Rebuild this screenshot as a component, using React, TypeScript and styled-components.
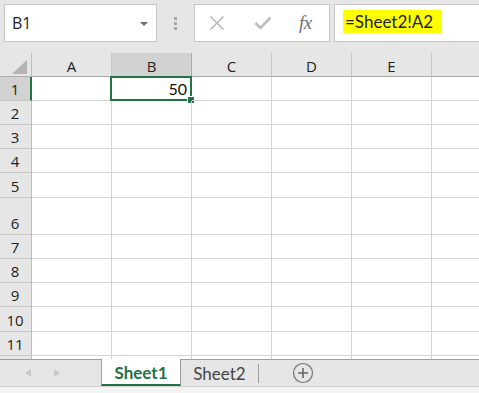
import React from "react";
import styled, { createGlobalStyle } from "styled-components";

const Global = createGlobalStyle`
  html, body { margin: 0; padding: 0; background: #ffffff; }
  * { box-sizing: border-box; }
`;

const COLS = ["A", "B", "C", "D", "E", ""];
const ROW_HEIGHTS = [24, 24, 24, 24, 25, 37, 24, 24, 24, 25, 24, 24];
const VISIBLE_LABELS = 11;
const GREEN = "#217346";
const UI_FONT = `"Open Sans", "Noto Sans", sans-serif`;
const CELL_FONT = `"Lato", "Liberation Sans", sans-serif`;

const Page = styled.div`
  width: 479px;
  height: 393px;
  overflow: hidden;
  display: flex;
  flex-direction: column;
  background: #e6e6e6;
`;

const Toolbar = styled.div`
  height: 53px;
  flex: none;
  display: flex;
  align-items: flex-start;
  padding: 4px 0 0 4px;
  background: #e6e6e6;
  overflow: hidden;
  & > * { flex: none; }
`;

const NameBox = styled.div`
  width: 153px;
  height: 38px;
  background: #fff;
  border: 1px solid #c6c6c6;
  display: flex;
  align-items: center;
  justify-content: space-between;
  padding: 0 8px 0 7px;
  font-family: ${UI_FONT};
  font-size: 16px;
  color: #222;
`;

const DropArrow = styled.span`
  width: 0;
  height: 0;
  border-left: 4px solid transparent;
  border-right: 4px solid transparent;
  border-top: 4px solid #6e6e6e;
  margin-top: 2px;
`;

const Dots = styled.div`
  width: 37px;
  height: 38px;
  display: flex;
  flex-direction: column;
  align-items: center;
  justify-content: center;
  gap: 2px;
`;

const Dot = styled.span`
  width: 3px;
  height: 3px;
  background: #a8a8a8;
`;

const ButtonGroup = styled.div`
  width: 136px;
  height: 38px;
  background: #fff;
  border: 1px solid #c6c6c6;
  display: flex;
  align-items: center;
  padding-left: 14px;
`;

const IconSlot = styled.div<{ $w: number }>`
  width: ${(p) => p.$w}px;
  height: 36px;
  display: flex;
  align-items: center;
  flex: none;
`;

const Fx = styled.span`
  font-family: "Liberation Serif", "DejaVu Serif", serif;
  font-style: italic;
  font-size: 19px;
  color: #6f6f6f;
  letter-spacing: -0.5px;
`;

const FormulaBar = styled.div`
  width: 160px;
  margin-left: 4px;
  height: 38px;
  background: #fff;
  border: 1px solid #c6c6c6;
  border-right: none;
  display: flex;
  align-items: center;
  padding-left: 8px;
`;

const Highlight = styled.span`
  background: #ffff00;
  height: 23px;
  line-height: 23px;
  padding: 0 9px 0 2px;
  margin-top: -4px;
  font-family: ${CELL_FONT};
  font-size: 17px;
  color: #222;
`;

const Sheet = styled.div`
  flex: none;
  height: 306px;
  display: grid;
  grid-template-columns: 32px repeat(6, 80px);
  grid-template-rows: 24px ${ROW_HEIGHTS.map((h) => `${h}px`).join(" ")};
  overflow: hidden;
  background: #fff;
`;

const Corner = styled.div`
  background: #e6e6e6;
  border-right: 1px solid #bdbdbd;
  border-bottom: 1px solid #ababab;
  position: relative;
`;

const CornerTri = styled.svg`
  position: absolute;
  left: 12px;
  top: 7px;
`;

const ColHeader = styled.div<{ $sel?: boolean }>`
  background: ${(p) => (p.$sel ? "#d2d2d2" : "#e6e6e6")};
  border-right: 1px solid ${(p) => (p.$sel ? "#ababab" : "#c6c6c6")};
  border-bottom: 1px solid #ababab;
  display: flex;
  align-items: center;
  justify-content: center;
  font-family: ${UI_FONT};
  font-size: 15px;
  color: #222;
  padding-top: 2px;
`;

const RowHeader = styled.div<{ $sel?: boolean }>`
  background: ${(p) => (p.$sel ? "#d2d2d2" : "#e6e6e6")};
  border-right: ${(p) => (p.$sel ? `2px solid ${GREEN}` : "1px solid #bdbdbd")};
  border-bottom: 1px solid #c6c6c6;
  display: flex;
  align-items: flex-end;
  justify-content: center;
  padding-bottom: 1px;
  padding-right: ${(p) => (p.$sel ? "0" : "1px")};
  font-family: ${UI_FONT};
  font-size: 15px;
  line-height: 20px;
  color: #222;
`;

const Cell = styled.div`
  border-right: 1px solid #d4d4d4;
  border-bottom: 1px solid #d4d4d4;
  position: relative;
  display: flex;
  align-items: center;
  justify-content: flex-end;
  padding-right: 4px;
  font-family: ${CELL_FONT};
  font-size: 16px;
  color: #111;
`;

const Selection = styled.div`
  position: absolute;
  left: -2px;
  top: -1px;
  right: -1px;
  bottom: -1px;
  border: 2px solid ${GREEN};
  pointer-events: none;
`;

const FillHandle = styled.div`
  position: absolute;
  right: -4px;
  bottom: -4px;
  width: 6px;
  height: 6px;
  background: ${GREEN};
  outline: 1px solid #fff;
`;

const TabBar = styled.div`
  height: 27px;
  flex: none;
  display: flex;
  align-items: stretch;
  background: #e6e6e6;
  border-top: 1px solid #9e9e9e;
`;

const NavArrows = styled.div`
  width: 101px;
  display: flex;
  align-items: center;
  padding-left: 25px;
  gap: 23px;
`;

const Tri = styled.span<{ $dir: "l" | "r" }>`
  width: 0;
  height: 0;
  border-top: 4px solid transparent;
  border-bottom: 4px solid transparent;
  ${(p) =>
    p.$dir === "l"
      ? "border-right: 6px solid #c8c8c8;"
      : "border-left: 6px solid #c8c8c8;"}
`;

const Tab = styled.div<{ $active?: boolean }>`
  width: ${(p) => (p.$active ? "80px" : "77px")};
  display: flex;
  align-items: center;
  justify-content: center;
  font-family: "Lato", "Liberation Sans", sans-serif;
  font-size: 17px;
  font-weight: ${(p) => (p.$active ? 700 : 400)};
  color: ${(p) => (p.$active ? GREEN : "#444")};
  background: ${(p) => (p.$active ? "#fff" : "transparent")};
  ${(p) =>
    p.$active
      ? `border-left: 1px solid #9e9e9e; border-right: 1px solid #9e9e9e; border-bottom: 2px solid ${GREEN}; margin-top: -1px; padding-top: 1px;`
      : ""}
`;

const TabSep = styled.div`
  width: 1px;
  background: #9e9e9e;
  margin: 4px 0 3px 0;
`;

const AddButton = styled.div`
  margin-left: 33px;
  display: flex;
  align-items: center;
`;

const StatusStrip = styled.div`
  flex: 1;
  background: #f3f3f3;
  border-top: 1px solid #d0d0d0;
`;

export default function App() {
  return (
    <>
      <Global />
      <Page>
        <Toolbar>
          <NameBox>
            <span>B1</span>
            <DropArrow />
          </NameBox>
          <Dots>
            <Dot />
            <Dot />
            <Dot />
          </Dots>
          <ButtonGroup>
            <IconSlot $w={45}>
              <svg width="16" height="16" viewBox="0 0 16 16">
                <path d="M1.5 1.5 L14.5 14.5 M14.5 1.5 L1.5 14.5" stroke="#b8b8b8" strokeWidth="1.6" fill="none" />
              </svg>
            </IconSlot>
            <IconSlot $w={45}>
              <svg width="18" height="14" viewBox="0 0 18 14">
                <path d="M1.5 7 L6.5 12 L16.5 1.5" stroke="#bdbdbd" strokeWidth="2.6" fill="none" />
              </svg>
            </IconSlot>
            <IconSlot $w={30}>
              <Fx>fx</Fx>
            </IconSlot>
          </ButtonGroup>
          <FormulaBar>
            <Highlight>=Sheet2!A2</Highlight>
          </FormulaBar>
        </Toolbar>
        <Sheet>
          <Corner>
            <CornerTri width="15" height="14" viewBox="0 0 15 14">
              <polygon points="15,0 15,14 0,14" fill="#b4b4b4" />
            </CornerTri>
          </Corner>
          {COLS.map((c, i) => (
            <ColHeader key={`h${i}`} $sel={c === "B"}>
              {c}
            </ColHeader>
          ))}
          {ROW_HEIGHTS.map((_, r) => (
            <React.Fragment key={`r${r}`}>
              <RowHeader $sel={r === 0}>{r < VISIBLE_LABELS ? r + 1 : ""}</RowHeader>
              {COLS.map((c, ci) => (
                <Cell key={`c${r}-${ci}`}>
                  {r === 0 && c === "B" ? (
                    <>
                      50
                      <Selection>
                        <FillHandle />
                      </Selection>
                    </>
                  ) : null}
                </Cell>
              ))}
            </React.Fragment>
          ))}
        </Sheet>
        <TabBar>
          <NavArrows>
            <Tri $dir="l" />
            <Tri $dir="r" />
          </NavArrows>
          <Tab $active>Sheet1</Tab>
          <Tab>Sheet2</Tab>
          <TabSep />
          <AddButton>
            <svg width="22" height="22" viewBox="0 0 22 22">
              <circle cx="11" cy="11" r="9.5" stroke="#777" strokeWidth="1.2" fill="none" />
              <path d="M11 6 V16 M6 11 H16" stroke="#666" strokeWidth="1.6" />
            </svg>
          </AddButton>
        </TabBar>
        <StatusStrip />
      </Page>
    </>
  );
}
